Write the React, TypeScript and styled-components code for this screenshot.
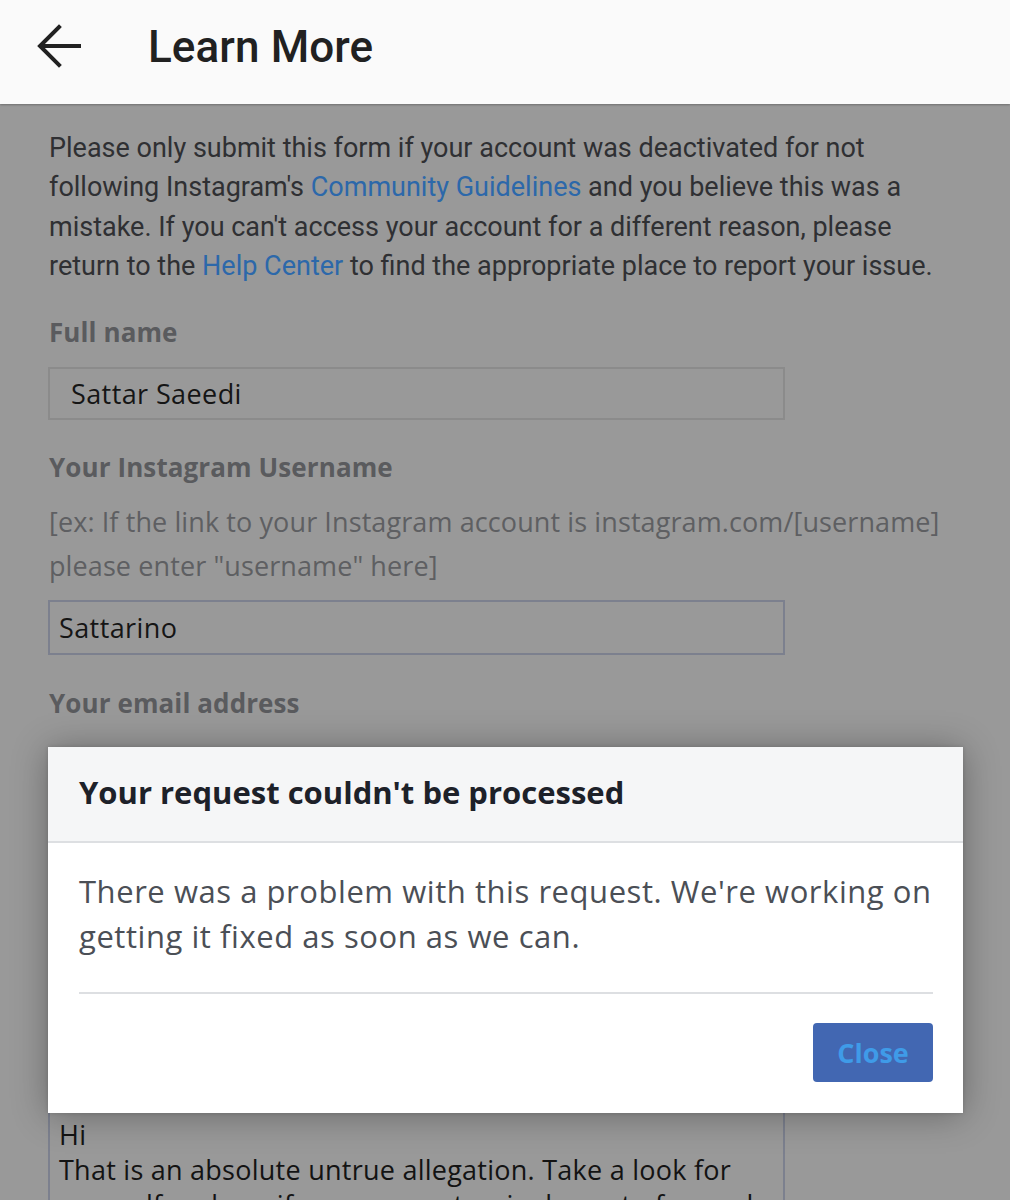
import React from "react";
import styled, { createGlobalStyle } from "styled-components";

const Global = createGlobalStyle`
  html, body { margin: 0; padding: 0; }
  body {
    width: 1010px;
    height: 1200px;
    overflow: hidden;
    background: #999999;
    font-family: "Open Sans", "Liberation Sans", sans-serif;
  }
  * { box-sizing: border-box; }
`;

const Page = styled.div`
  display: flex;
  flex-direction: column;
  width: 1010px;
  height: 1200px;
  overflow: hidden;
  background: #999999;
`;

const AppBar = styled.header`
  position: relative;
  z-index: 2;
  display: flex;
  align-items: flex-start;
  height: 104px;
  flex: 0 0 104px;
  background: #fafafa;
  box-shadow: 0 1px 2px rgba(0, 0, 0, 0.28);
`;

const BackButton = styled.button`
  display: flex;
  margin: 20px 0 0 30px;
  padding: 0;
  border: 0;
  background: transparent;
  width: 56px;
  height: 52px;
`;

const Title = styled.h1`
  margin: 25px 0 0 62px;
  font-family: Roboto, "Noto Sans", sans-serif;
  font-weight: 500;
  font-size: 44px;
  line-height: 44px;
  color: #212121;
  letter-spacing: 0.1px;
`;

const Content = styled.main`
  position: relative;
  flex: 1;
  display: flex;
  flex-direction: column;
  padding: 25px 48px 0 48px;
`;

const Intro = styled.p`
  margin: 0 0 0 1px;
  max-width: 912px;
  font-family: Roboto, "Noto Sans", sans-serif;
  font-size: 27px;
  line-height: 39.3px;
  color: #2f3033;
`;

const Link = styled.a`
  color: #2c68aa;
  text-decoration: none;
`;

const Label = styled.label<{ $gap: number }>`
  display: block;
  margin: ${(p) => p.$gap}px 0 0 1px;
  font-size: 26px;
  line-height: 32px;
  font-weight: 700;
  letter-spacing: 0.1px;
  color: #5a5b5e;
`;

const Helper = styled.div`
  margin: 17px 0 0 1px;
  font-size: 27px;
  line-height: 44px;
  letter-spacing: 0.1px;
  color: #5e5f62;
`;

const Field = styled.div<{ $gap: number; $h: number; $pad: number; $tone: "plain" | "focus" }>`
  display: flex;
  align-items: center;
  width: 737px;
  height: ${(p) => p.$h}px;
  margin-top: ${(p) => p.$gap}px;
  padding: 0 ${(p) => p.$pad}px;
  border: 2px solid ${(p) => (p.$tone === "focus" ? "#7c808e" : "#8b8b8b")};
  font-size: 27px;
  letter-spacing: 0.4px;
  color: #151515;
`;

const TextArea = styled.div`
  width: 737px;
  height: 200px;
  margin-top: 292px;
  padding: 9px 9px;
  border: 2px solid #7c808e;
  border-bottom: 0;
  font-size: 27px;
  line-height: 35px;
  letter-spacing: 0.25px;
  color: #131313;
  white-space: pre-wrap;
`;

const Dialog = styled.div`
  position: absolute;
  top: 643px;
  left: 48px;
  width: 915px;
  display: flex;
  flex-direction: column;
  background: #ffffff;
  box-shadow: 0 2px 34px rgba(0, 0, 0, 0.32), 0 0 4px rgba(0, 0, 0, 0.15);
`;

const DialogHeader = styled.div`
  padding: 26px 31px 30px;
  background: #f5f6f7;
  border-bottom: 2px solid #dddfe2;
`;

const DialogTitle = styled.h2`
  margin: 0;
  font-size: 31px;
  line-height: 38px;
  font-weight: 700;
  color: #1d2129;
`;

const DialogBody = styled.div`
  display: flex;
  flex-direction: column;
  padding: 26px 30px 31px 31px;
`;

const DialogText = styled.p`
  margin: 0;
  font-size: 31px;
  line-height: 45px;
  letter-spacing: 0.55px;
  color: #4b4f56;
`;

const Divider = styled.hr`
  margin: 33px 0 0;
  border: 0;
  height: 2px;
  background: #dddfe2;
`;

const Actions = styled.div`
  display: flex;
  justify-content: flex-end;
  margin-top: 29px;
`;

const CloseButton = styled.button`
  width: 120px;
  height: 59px;
  border: 0;
  border-radius: 4px;
  background: #4267b2;
  font-family: "Open Sans", "Liberation Sans", sans-serif;
  font-size: 27px;
  font-weight: 700;
  color: #3f9be8;
  padding: 0;
`;

export default function App() {
  return (
    <>
      <Global />
      <Page>
        <AppBar>
          <BackButton aria-label="Back">
            <svg width="56" height="52" viewBox="0 0 56 52" fill="none">
              <path d="M11 26 H49" stroke="#212121" strokeWidth="4" strokeLinecap="square" />
              <path d="M29 7 L10 26 L29 45" stroke="#212121" strokeWidth="4" strokeLinecap="square" fill="none" />
            </svg>
          </BackButton>
          <Title>Learn More</Title>
        </AppBar>
        <Content>
          <Intro>
            Please only submit this form if your account was deactivated for not following Instagram's{" "}
            <Link>Community Guidelines</Link> and you believe this was a mistake. If you can't access your
            account for a different reason, please return to the <Link>Help Center</Link> to find the
            appropriate place to report your issue.
          </Intro>
          <Label $gap={30}>Full name</Label>
          <Field $gap={19} $h={53} $pad={21} $tone="plain">Sattar Saeedi</Field>
          <Label $gap={31}>Your Instagram Username</Label>
          <Helper>
            [ex: If the link to your Instagram account is instagram.com/[username]
            <br />
            please enter "username" here]
          </Helper>
          <Field $gap={12} $h={55} $pad={9} $tone="focus">Sattarino</Field>
          <Label $gap={32}>Your email address</Label>
          <Field $gap={40} $h={55} $pad={9} $tone="focus" />
          <TextArea>
            {"Hi\nThat is an absolute untrue allegation. Take a look for yourself and see if you can spot a single post of sexual"}
          </TextArea>
          <Dialog role="dialog">
            <DialogHeader>
              <DialogTitle>Your request couldn't be processed</DialogTitle>
            </DialogHeader>
            <DialogBody>
              <DialogText>
                There was a problem with this request. We're working on getting it fixed as soon as we can.
              </DialogText>
              <Divider />
              <Actions>
                <CloseButton>Close</CloseButton>
              </Actions>
            </DialogBody>
          </Dialog>
        </Content>
      </Page>
    </>
  );
}
